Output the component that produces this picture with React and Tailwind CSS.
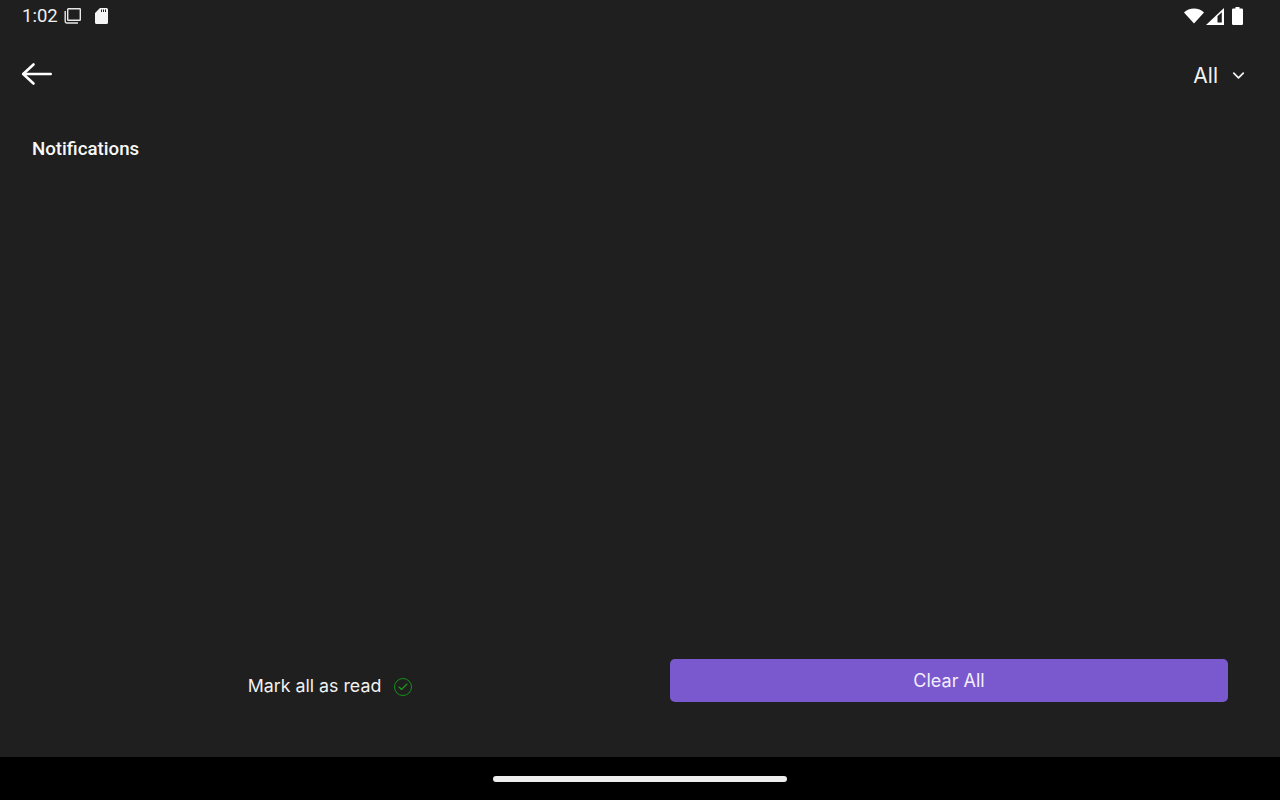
import { Check, ChevronDown } from "lucide-react";

function BackArrow() {
  return (
    <svg width="31" height="24" viewBox="0 0 31 24" fill="none" stroke="#ffffff" strokeWidth="2.6" strokeLinecap="round" strokeLinejoin="round">
      <path d="M29.700 12H2.500" />
      <path d="M12.500 2.500L2.200 12l10.300 9.500" />
    </svg>
  );
}

function RecentsIcon() {
  return (
    <svg width="18" height="18" viewBox="0 0 18 18" fill="none" stroke="#e8e8e8" strokeWidth="1.4">
      <rect x="3.700" y="1.700" width="12.600" height="11.600" rx="0.600" />
      <path d="M1.200 4v10.600c0 .9.500 1.400 1.400 1.400H14" />
    </svg>
  );
}

function SdCardIcon() {
  return (
    <svg width="15" height="16" viewBox="0 0 15 16" fill="#f5f5f5">
      <path d="M6 0h6.500A1.500 1.500 0 0 1 14 1.500v13a1.500 1.500 0 0 1-1.500 1.500h-10A1.500 1.500 0 0 1 1 14.500V5z" />
      <path d="M7 1.500h1v2.500H7zM9 1.500h1v2.500H9zM11 1.500h1v2.500h-1z" fill="#1f1f1f" />
    </svg>
  );
}

function WifiIcon() {
  return (
    <svg width="20" height="16" viewBox="0 0 20 16" fill="#ffffff">
      <path d="M0 4.600C2.600 1.800 6.100.4 10 .4s7.400 1.400 10 4.200L10 15.600z" />
    </svg>
  );
}

function SignalIcon() {
  return (
    <svg width="18" height="17" viewBox="0 0 18 17">
      <path d="M18 0V17H0z" fill="#ffffff" />
      <path d="M11.500 8.200V14.500H15.800V4.200z" fill="#1f1f1f" />
    </svg>
  );
}

function BatteryIcon() {
  return (
    <svg width="11" height="18" viewBox="0 0 11 18" fill="#ffffff">
      <path d="M3.500 0h4v1.500h2.300A1.200 1.200 0 0 1 11 2.700v14.100A1.200 1.200 0 0 1 9.800 18H1.200A1.200 1.200 0 0 1 0 16.800V2.700A1.200 1.200 0 0 1 1.200 1.500h2.300z" />
    </svg>
  );
}

export default function App() {
  return (
    <div className="flex h-[800px] w-[1280px] flex-col overflow-hidden bg-[#1f1f1f] font-['Inter',sans-serif] text-white">
      <div className="flex h-8 items-center justify-between pl-[22px] pr-[37px] font-['Roboto',sans-serif]">
        <div className="flex items-center">
          <span className="text-[18.500px] leading-none text-[#f0f0f0]">1:02</span>
          <span className="ml-[6px]"><RecentsIcon /></span>
          <span className="ml-[12px]"><SdCardIcon /></span>
        </div>
        <div className="flex items-center">
          <WifiIcon />
          <span className="ml-[2px]"><SignalIcon /></span>
          <span className="ml-[8px]"><BatteryIcon /></span>
        </div>
      </div>

      <div className="flex h-[84px] items-center justify-between pl-[21px] pr-[32px]">
        <BackArrow />
        <div className="mt-[2px] flex items-center gap-[11px]">
          <span className="text-[21px] leading-none text-[#f2f2f2]">All</span>
          <ChevronDown size={19} strokeWidth={2.2} color="#f2f2f2" />
        </div>
      </div>

      <h1 className="pl-8 pt-[21px] font-['Roboto',sans-serif] text-[18.700px] leading-[24px] font-medium text-[#f8f8f8]">Notifications</h1>

      <div className="flex-1" />

      <div className="flex h-[98px] items-start">
        <div className="flex h-[39px] w-[660px] items-end justify-center gap-[13px]">
          <span className="text-[17.800px] leading-[24px] text-[#f2f2f2]">Mark all as read</span>
          <span className="mb-[2px] flex h-[18px] w-[18px] items-center justify-center rounded-full border-[1.500px] border-[#169216]">
            <Check size={12} strokeWidth={2.2} color="#1d9c1d" />
          </span>
        </div>
        <button className="ml-[10px] h-[43px] w-[558px] rounded-[5px] bg-[#7a58ce] pb-[1px] text-[18px] text-[#f2eefc]">Clear All</button>
      </div>

      <div className="flex h-[43px] items-center justify-center bg-black">
        <div className="h-[6px] w-[294px] rounded-full bg-[#eeeeee]" />
      </div>
    </div>
  );
}
